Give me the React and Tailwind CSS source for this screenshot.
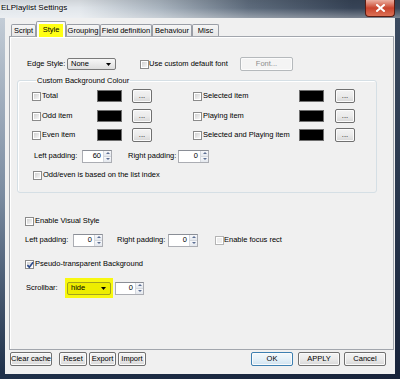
import React from "react";

// small Win7-ish dialog widgets

function Check({ checked = false, faint = false, className = "" }) {
  return (
    <div
      className={`w-[9px] h-[9px] shrink-0 border bg-white p-[1px] ${faint ? "border-[#b4b4b4]" : "border-[#8a8a8a]"} ${className}`}
    >
      <div className={`relative w-full h-full ${faint ? "bg-[#eeeeee]" : "bg-linear-to-br from-[#d2d2d2] to-[#f6f6f6]"}`}>
        {checked && (
          <svg viewBox="0 0 7 7" className="absolute -left-[1px] -top-[1px] w-[8px] h-[8px]">
            <path d="M1.2 3.6 L2.9 5.4 L6.2 1.1" fill="none" stroke="#2d4b8c" strokeWidth="1.4" />
          </svg>
        )}
      </div>
    </div>
  );
}

function Btn({ children, className = "", focused = false, disabled = false }) {
  let look = "border-[#707070] bg-linear-to-b from-[#f3f3f3] via-[#ebebeb] to-[#d7d7d7] text-black";
  if (focused) look = "border-[#3c7fb1] bg-linear-to-b from-[#f2f8fc] via-[#e6f1f8] to-[#cfe3f1] text-black";
  if (disabled) look = "border-[#b5b9bc] bg-[#f4f4f4] text-[#8d8d8d]";
  return (
    <div
      className={`h-[14px] shrink-0 border rounded-[2px] shadow-[inset_0_0_0_1px_#fbfbfb] flex items-center justify-center whitespace-nowrap ${look} ${className}`}
    >
      {children}
    </div>
  );
}

function Caret() {
  return (
    <svg width="5" height="3" viewBox="0 0 5 3" className="shrink-0">
      <polygon points="0,0 5,0 2.5,3" fill="#000" />
    </svg>
  );
}

function Combo({ value, className = "", yellow = false }) {
  const look = yellow
    ? "border-[#a3a31c] bg-[#eded00]"
    : "border-[#7a7a7a] bg-linear-to-b from-[#f7f7f7] to-[#dedede]";
  return (
    <div className={`h-[12px] shrink-0 border rounded-[2px] flex items-center pl-[3px] pr-[4px] ${look} ${className}`}>
      <span className="flex-1">{value}</span>
      <Caret />
    </div>
  );
}

function Arrow({ up }) {
  return (
    <svg width="4" height="2" viewBox="0 0 4 2">
      <polygon points={up ? "0,2 4,2 2,0" : "0,0 4,0 2,2"} fill="#5c6f93" />
    </svg>
  );
}

function Spin({ value, className = "" }) {
  return (
    <div className={`h-[13px] shrink-0 border border-[#abadb3] border-t-[#8a8e96] bg-white flex ${className}`}>
      <span className="flex-1 text-right pr-[2px] self-center">{value}</span>
      <div className="w-[8px] flex flex-col border-l border-[#d4d8de]">
        <div className="flex-1 bg-linear-to-b from-[#f7f8fa] to-[#e4e8ee] flex items-center justify-center border-b border-[#d4d8de]">
          <Arrow up />
        </div>
        <div className="flex-1 bg-linear-to-b from-[#f7f8fa] to-[#e4e8ee] flex items-center justify-center">
          <Arrow />
        </div>
      </div>
    </div>
  );
}

function Swatch() {
  return <div className="w-[25px] h-[12px] shrink-0 bg-black border border-[#6f6f6f]" />;
}

function ColorRow({ left, right, className = "" }) {
  return (
    <div className={`h-[14px] flex items-center ${className}`}>
      <Check />
      <span className="ml-[1px] w-[55px]">{left}</span>
      <Swatch />
      <Btn className="ml-[10px] w-[20px]">...</Btn>
      <Check className="ml-[41px]" />
      <span className="ml-[1px] w-[96px]">{right}</span>
      <Swatch />
      <Btn className="ml-[11px] w-[20px]">...</Btn>
    </div>
  );
}

function TitleBar() {
  return (
    <div className="h-[18px] shrink-0 flex items-start bg-[linear-gradient(to_bottom,rgba(0,0,0,0.08),transparent_45%,rgba(255,255,255,0.35)),linear-gradient(to_right,#e1e6eb_20%,#a9b4bf_40%,#5e6c7d_62%,#364356_88%)]">
      <span className="ml-[1px] mt-[4px] text-[8px] text-black [text-shadow:0_0_3px_#ffffff]">ELPlaylist Settings</span>
      <div className="ml-auto mr-[5px] w-[30px] h-[17px] rounded-b-[4px] border border-t-0 border-[#5a1c12] bg-linear-to-b from-[#eab0a2] via-[#c8432d] to-[#dc7055] flex items-center justify-center">
        <svg width="9" height="8" viewBox="0 0 9 8">
          <path d="M1 1 L8 7 M8 1 L1 7" stroke="#ffffff" strokeWidth="2" strokeLinecap="square" />
        </svg>
      </div>
    </div>
  );
}

function Tabs() {
  const tab = "h-[12px] shrink-0 border border-b-0 border-[#9a9ea6] rounded-t-[2px] bg-linear-to-b from-[#f6f6f6] to-[#e6e6e6] flex items-center justify-center";
  return (
    <div className="h-[14px] shrink-0 flex items-end pl-[2px]">
      <div className={`${tab} w-[25px]`}>Script</div>
      <div className="relative z-10 -mb-[1px] h-[16px] w-[30px] shrink-0 border border-b-0 border-[#9a9ea6] rounded-t-[2px] bg-[#fbfbfb] px-[2px] pt-[2px] flex">
        <div className="flex-1 bg-[#ffff14] flex items-center justify-center pb-[1px]">Style</div>
      </div>
      <div className={`${tab} w-[34px]`}>Grouping</div>
      <div className={`${tab} w-[52px]`}>Field definition</div>
      <div className={`${tab} w-[40px]`}>Behaviour</div>
      <div className={`${tab} w-[27px]`}>Misc</div>
    </div>
  );
}

function Panel() {
  return (
    <div className="h-[314px] shrink-0 border border-[#a2a6ad] shadow-[inset_1px_1px_0_#ffffff] flex flex-col pt-[20px]">
      <div className="h-[14px] flex items-center">
        <span className="ml-[17px] w-[40px]">Edge Style:</span>
        <Combo value="None" className="w-[49px]" />
        <Check className="ml-[24px]" />
        <span className="w-[91px]">Use custom default font</span>
        <Btn disabled className="w-[53px]">Font...</Btn>
      </div>

      <fieldset className="mt-[5px] ml-[7px] w-[360px] border border-[#d5dfe5] rounded-[3px] shadow-[inset_1px_1px_0_#ffffff] pl-[14px] pb-[12px]">
        <legend className="ml-[4px] px-[1px] leading-[9px]">Custom Background Colour</legend>
        <ColorRow className="mt-[4px]" left="Total" right="Selected item" />
        <ColorRow className="mt-[6px]" left="Odd item" right="Playing item" />
        <ColorRow className="mt-[5px]" left="Even item" right="Selected and Playing item" />
        <div className="mt-[7px] h-[14px] flex items-center">
          <span className="ml-[2px] w-[48px]">Left padding:</span>
          <Spin value="60" className="w-[30px]" />
          <span className="ml-[16px] w-[50px]">Right padding:</span>
          <Spin value="0" className="w-[31px]" />
        </div>
        <div className="mt-[7px] h-[10px] flex items-center">
          <Check className="ml-[1px]" />
          <span className="ml-[1px]">Odd/even is based on the list index</span>
        </div>
      </fieldset>

      <div className="mt-[23px] h-[10px] flex items-center">
        <Check className="ml-[15px]" />
        <span className="ml-[1px]">Enable Visual Style</span>
      </div>

      <div className="mt-[7px] h-[14px] flex items-center">
        <span className="ml-[15px] w-[48px]">Left padding:</span>
        <Spin value="0" className="w-[30px]" />
        <span className="ml-[14px] w-[51px]">Right padding:</span>
        <Spin value="0" className="w-[30px]" />
        <Check faint className="ml-[17px]" />
        <span>Enable focus rect</span>
      </div>

      <div className="mt-[12px] h-[10px] flex items-center">
        <Check checked className="ml-[15px]" />
        <span className="ml-[1px]">Pseudo-transparent Background</span>
      </div>

      <div className="mt-[9px] h-[20px] flex items-center">
        <span className="ml-[16px] w-[39px]">Scrollbar:</span>
        <div className="w-[48px] h-[20px] bg-[#f8f810] px-[2px] flex items-center">
          <Combo yellow value="hide" className="w-full h-[13px]" />
        </div>
        <Spin value="0" className="ml-[2px] w-[29px]" />
      </div>
    </div>
  );
}

function Footer() {
  return (
    <div className="mt-[2px] h-[14px] shrink-0 flex mr-[8px]">
      <Btn className="ml-[1px] w-[42px]">Clear cache</Btn>
      <Btn className="ml-[7px] w-[28px]">Reset</Btn>
      <Btn className="ml-[2px] w-[27px]">Export</Btn>
      <Btn className="ml-[2px] w-[28px]">Import</Btn>
      <Btn focused className="ml-auto w-[42px]">OK</Btn>
      <Btn className="ml-[5px] w-[42px]">APPLY</Btn>
      <Btn className="ml-[4px] w-[42px]">Cancel</Btn>
    </div>
  );
}

export default function App() {
  return (
    <div className="w-[400px] h-[379px] flex flex-col overflow-hidden bg-[#22324a] font-['Liberation_Sans',Arial,sans-serif] text-[7.5px] leading-none text-black">
      <TitleBar />
      <div className="flex flex-1 min-h-0">
        <div className="w-[5px] bg-linear-to-b from-[#c3ccd6] via-[#7a8ba0] to-[#1f3049]" />
        <div className="flex-1 bg-[#f0f0f0] flex flex-col pt-[4px] pl-[4px] pr-[1px]">
          <Tabs />
          <Panel />
          <Footer />
        </div>
        <div className="w-[5px] bg-linear-to-b from-[#3a4a5f] to-[#18233a]" />
      </div>
      <div className="h-[5px] shrink-0 bg-linear-to-r from-[#1f3049] to-[#18233a]" />
    </div>
  );
}
